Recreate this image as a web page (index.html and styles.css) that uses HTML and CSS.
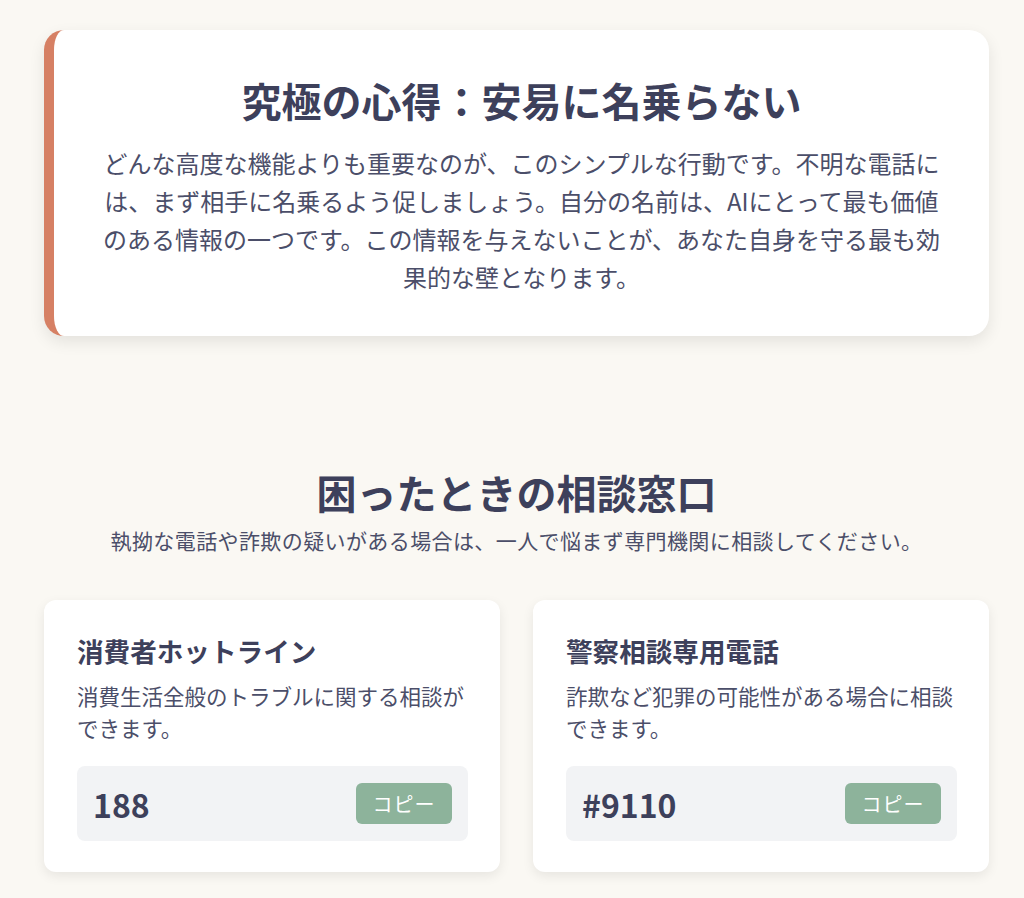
FILE: index.html
```html
<!DOCTYPE html>
<html lang="ja">
<head>
    <meta charset="UTF-8">
    <meta name="viewport" content="width=device-width, initial-scale=1.0">
    <title>相談窓口</title>
    <link rel="stylesheet" href="styles.css">
</head>
<body>

<main class="page">
    <section class="tip-card">
        <h2>究極の心得：安易に名乗らない</h2>
        <p>どんな高度な機能よりも重要なのが、このシンプルな行動です。不明な電話には、まず相手に名乗るよう促しましょう。自分の名前は、AIにとって最も価値のある情報の一つです。この情報を与えないことが、あなた自身を守る最も効果的な壁となります。</p>
    </section>

    <section class="help">
        <h2 class="help-title">困ったときの相談窓口</h2>
        <p class="help-lead">執拗な電話や詐欺の疑いがある場合は、一人で悩まず専門機関に相談してください。</p>

        <div class="contacts">
            <div class="contact-card">
                <h3>消費者ホットライン</h3>
                <p>消費生活全般のトラブルに関する相談ができます。</p>
                <div class="number-box">
                    <span class="number">188</span>
                    <button class="copy-btn" onclick="copyNumber('188')">コピー</button>
                </div>
            </div>
            <div class="contact-card">
                <h3>警察相談専用電話</h3>
                <p>詐欺など犯罪の可能性がある場合に相談できます。</p>
                <div class="number-box">
                    <span class="number">#9110</span>
                    <button class="copy-btn" onclick="copyNumber('#9110')">コピー</button>
                </div>
            </div>
        </div>
    </section>
</main>

<script>
    function copyNumber(num) {
        if (navigator.clipboard) {
            navigator.clipboard.writeText(num);
        }
    }
</script>

</body>
</html>
```

FILE: styles.css
```css
body {
    font-family: "Noto Sans CJK JP", "Noto Sans", sans-serif;
    margin: 0;
    padding: 0;
    background-color: #faf8f3;
    color: #3d405b;
}

.page {
    padding: 30px 35px 40px 44px;
}

.tip-card {
    background: white;
    border-left: 10px solid #d68064;
    border-radius: 20px;
    box-shadow: 0 6px 16px rgba(0, 0, 0, 0.09);
    padding: 40px 44px 40px 44px;
    text-align: center;
}

.tip-card h2 {
    font-size: 40px;
    line-height: 60px;
    font-weight: bold;
    margin: 0 0 14px;
}

.tip-card p {
    font-size: 24px;
    line-height: 38px;
    color: #4b4e69;
    margin: 0;
}

.help {
    margin-top: 126px;
    text-align: center;
}

.help-title {
    font-size: 40px;
    line-height: 60px;
    font-weight: bold;
    margin: 0 0 2px;
}

.help-lead {
    font-size: 21px;
    letter-spacing: 0.4px;
    line-height: 32px;
    color: #4b4e69;
    margin: 0 0 44px;
}

.contacts {
    display: grid;
    grid-template-columns: 1fr 1fr;
    gap: 33px;
    text-align: left;
}

.contact-card {
    background: white;
    border-radius: 12px;
    box-shadow: 0 4px 12px rgba(0, 0, 0, 0.08);
    padding: 31px 32px 31px 33px;
}

.contact-card h3 {
    font-size: 26.6px;
    line-height: 40px;
    font-weight: bold;
    margin: 0 0 9px;
}

.contact-card p {
    font-size: 21.5px;
    line-height: 32px;
    color: #4b4e69;
    margin: 0 0 22px;
}

.number-box {
    display: flex;
    justify-content: space-between;
    align-items: center;
    background: #f2f3f5;
    border-radius: 8px;
    height: 75px;
    padding: 0 16px;
}

.number {
    font-size: 32px;
    font-weight: bold;
}

.copy-btn {
    font-family: inherit;
    background: #8db39b;
    color: white;
    border: none;
    border-radius: 6px;
    height: 41px;
    width: 96px;
    font-size: 20px;
    letter-spacing: 1px;
    cursor: pointer;
}
```
